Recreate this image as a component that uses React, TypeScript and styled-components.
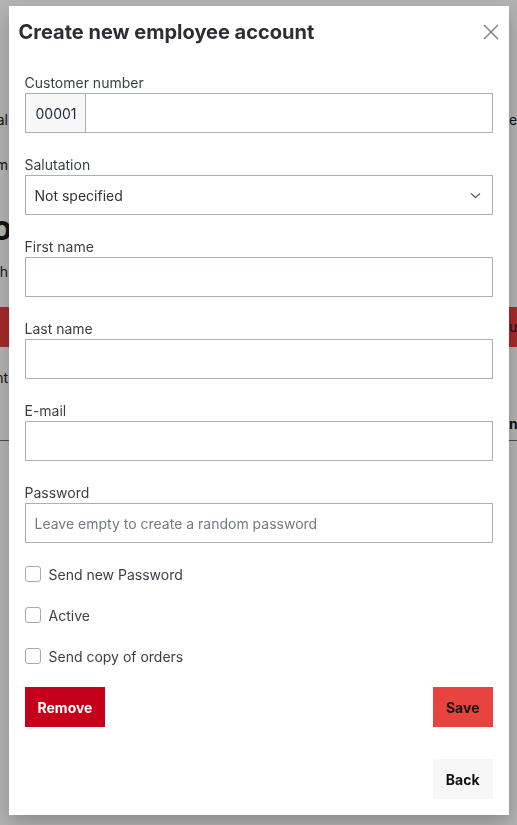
import React from "react";
import styled, { createGlobalStyle } from "styled-components";

const Global = createGlobalStyle`
  html, body { margin: 0; padding: 0; background: #fff; overflow: hidden; }
  body { font-family: Inter, "Noto Sans", "Liberation Sans", sans-serif; color: #1f2328; }
  * { box-sizing: border-box; }
`;

/* ---------- background page (behind the overlay) ---------- */
const BgPage = styled.div`
  width: calc(100% + 104px);
  margin: 0 -52px;
  height: 825px;
  padding-top: 110px;
  display: flex;
  flex-direction: column;
`;
const BgRow = styled.div<{ $mt?: number }>`
  display: grid;
  grid-template-columns: 60px 1fr 60px;
  margin-top: ${(p) => p.$mt ?? 0}px;
  color: #1c1c1c;
`;
const BgLeft = styled.div<{ $big?: boolean }>`
  grid-column: 1;
  text-align: right;
  white-space: nowrap;
  font-size: ${(p) => (p.$big ? "34px" : "14px")};
  font-weight: ${(p) => (p.$big ? 700 : 400)};
  line-height: ${(p) => (p.$big ? "36px" : "20px")};
`;
const BgRight = styled.div<{ $bold?: boolean }>`
  grid-column: 3;
  white-space: nowrap;
  font-size: 14px;
  line-height: 20px;
  font-weight: ${(p) => (p.$bold ? 700 : 400)};
`;
const BgBar = styled.div`
  margin-top: 25px;
  height: 40px;
  background: #eb3c3c;
  display: grid;
  grid-template-columns: 60px 1fr 60px;
  align-items: center;
  font-size: 14px;
  font-weight: 700;
  color: #1c1c1c;
`;
const BgLine = styled.div`
  margin-top: 6px;
  border-top: 1px solid #6f6f6f;
`;

/* ---------- overlay + modal ---------- */
const Overlay = styled.div`
  position: fixed;
  inset: 0;
  background: rgba(0, 0, 0, 0.3);
  display: flex;
  justify-content: center;
  align-items: flex-start;
  padding-top: 6px;
`;
const Modal = styled.div`
  width: 500px;
  background: #fff;
  box-shadow: 0 8px 18px rgba(0, 0, 0, 0.22);
  display: flex;
  flex-direction: column;
  padding: 0 16px 16px;
`;
const Header = styled.div`
  display: flex;
  align-items: center;
  justify-content: space-between;
  height: 51px;
  margin: 0 -7px 0 -6px;
`;
const Title = styled.h2`
  margin: 0;
  font-size: 20px;
  line-height: 28px;
  font-weight: 700;
  color: #2b2f34;
`;
const CloseBtn = styled.button`
  border: 0;
  background: none;
  padding: 0;
  width: 18px;
  height: 18px;
  display: flex;
  align-items: center;
  justify-content: center;
  cursor: pointer;
`;
const Form = styled.div`
  margin-top: 16px;
  display: flex;
  flex-direction: column;
  gap: 22px;
`;
const Field = styled.div`
  display: flex;
  flex-direction: column;
`;
const Label = styled.label`
  font-size: 14px;
  line-height: 20px;
  color: #3b3f45;
`;
const InputBox = styled.div`
  height: 40px;
  border: 1px solid #a9b0b9;
  display: flex;
  align-items: stretch;
  background: #fff;
`;
const Prefix = styled.div`
  width: 60px;
  background: #f7f7f7;
  border-right: 1px solid #a9b0b9;
  display: flex;
  align-items: center;
  padding-left: 10px;
  font-size: 14px;
  color: #1d2a3a;
`;
const TextInput = styled.input`
  flex: 1;
  border: 0;
  outline: none;
  padding: 0 9px;
  font-family: inherit;
  font-size: 14px;
  color: #2b2f34;
  background: transparent;
  &::placeholder { color: #737a84; }
`;
const SelectBox = styled.div`
  flex: 1;
  display: flex;
  align-items: center;
  justify-content: space-between;
  padding: 0 11px 0 9px;
  font-size: 14px;
  color: #2f3338;
`;
const CheckGroup = styled.div`
  display: flex;
  flex-direction: column;
  gap: 21px;
  margin-top: -1px;
`;
const CheckRow = styled.label`
  display: flex;
  align-items: center;
  gap: 8px;
  height: 20px;
  font-size: 14px;
  color: #3b3f45;
`;
const CheckBox = styled.span`
  width: 16px;
  height: 16px;
  border: 1px solid #a4abb5;
  border-radius: 3px;
  background: #fff;
`;
const ButtonRow = styled.div<{ $end?: boolean; $mt?: number }>`
  display: flex;
  justify-content: ${(p) => (p.$end ? "flex-end" : "space-between")};
  margin-top: ${(p) => p.$mt ?? 0}px;
`;
const Btn = styled.button<{ $variant: "danger" | "primary" | "plain" }>`
  height: 40px;
  padding: 0 13px;
  border: 0;
  font-family: inherit;
  font-size: 14px;
  font-weight: 700;
  cursor: pointer;
  background: ${(p) =>
    p.$variant === "danger" ? "#c4001b" : p.$variant === "primary" ? "#e8433f" : "#f7f7f7"};
  color: ${(p) => (p.$variant === "danger" ? "#fff" : "#111")};
`;

const CloseIcon = () => (
  <svg width="16" height="16" viewBox="0 0 16 16" fill="none">
    <path d="M1 1L15 15M15 1L1 15" stroke="#7d8085" strokeWidth="1.4" />
  </svg>
);
const Chevron = () => (
  <svg width="11" height="7" viewBox="0 0 11 7" fill="none">
    <path d="M1 1.5L5.5 5.5L10 1.5" stroke="#555a60" strokeWidth="1.3" />
  </svg>
);

export default function App() {
  return (
    <>
      <Global />
      <BgPage>
        <BgRow>
          <BgLeft>General</BgLeft>
          <BgRight>eve</BgRight>
        </BgRow>
        <BgRow $mt={25}>
          <BgLeft>Form</BgLeft>
        </BgRow>
        <BgRow $mt={35}>
          <BgLeft $big>Info</BgLeft>
        </BgRow>
        <BgRow $mt={16}>
          <BgLeft>Search</BgLeft>
        </BgRow>
        <BgBar>
          <BgRight>use</BgRight>
        </BgBar>
        <BgRow $mt={21}>
          <BgLeft>Content</BgLeft>
        </BgRow>
        <BgRow $mt={26}>
          <BgRight $bold>name</BgRight>
        </BgRow>
        <BgLine />
      </BgPage>
      <Overlay>
        <Modal>
          <Header>
            <Title>Create new employee account</Title>
            <CloseBtn aria-label="Close">
              <CloseIcon />
            </CloseBtn>
          </Header>
          <Form>
            <Field>
              <Label>Customer number</Label>
              <InputBox>
                <Prefix>00001</Prefix>
                <TextInput />
              </InputBox>
            </Field>
            <Field>
              <Label>Salutation</Label>
              <InputBox>
                <SelectBox>
                  <span>Not specified</span>
                  <Chevron />
                </SelectBox>
              </InputBox>
            </Field>
            <Field>
              <Label>First name</Label>
              <InputBox>
                <TextInput />
              </InputBox>
            </Field>
            <Field>
              <Label>Last name</Label>
              <InputBox>
                <TextInput />
              </InputBox>
            </Field>
            <Field>
              <Label>E-mail</Label>
              <InputBox>
                <TextInput />
              </InputBox>
            </Field>
            <Field>
              <Label>Password</Label>
              <InputBox>
                <TextInput placeholder="Leave empty to create a random password" />
              </InputBox>
            </Field>
            <CheckGroup>
              <CheckRow>
                <CheckBox />
                Send new Password
              </CheckRow>
              <CheckRow>
                <CheckBox />
                Active
              </CheckRow>
              <CheckRow>
                <CheckBox />
                Send copy of orders
              </CheckRow>
            </CheckGroup>
            <ButtonRow $mt={-1}>
              <Btn $variant="danger">Remove</Btn>
              <Btn $variant="primary">Save</Btn>
            </ButtonRow>
          </Form>
          <ButtonRow $end $mt={32}>
            <Btn $variant="plain">Back</Btn>
          </ButtonRow>
        </Modal>
      </Overlay>
    </>
  );
}
